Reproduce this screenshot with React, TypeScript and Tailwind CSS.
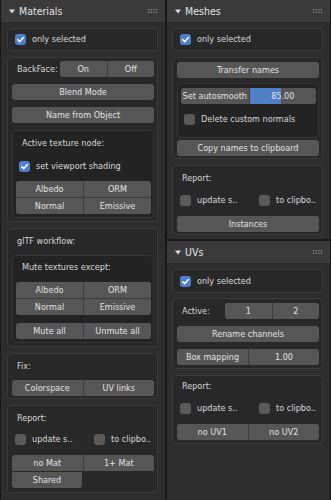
import type { ReactNode } from "react";

const BLUE = "#4f7fc6";

function Grip() {
  const dots = [];
  for (let c = 0; c < 4; c++) {
    for (let r = 0; r < 2; r++) {
      dots.push(<rect key={`${c}-${r}`} x={c * 2.6} y={r * 2.6} width="1.3" height="1.3" fill="#8a8a8a" />);
    }
  }
  return (
    <svg width="10" height="5" viewBox="0 0 10 5">
      {dots}
    </svg>
  );
}

function Header({ title }: { title: string }) {
  return (
    <div className="flex h-[22px] shrink-0 items-center bg-[#3a3a3a] pl-[8px] pr-[7px] text-[10.5px] text-[#e4e4e4]">
      <svg width="6" height="5" viewBox="0 0 6 5" className="mr-[4px]">
        <path d="M0 0.5h6L3 4.5z" fill="#d8d8d8" />
      </svg>
      <span className="flex-1">{title}</span>
      <Grip />
    </div>
  );
}

function Box({ children, className = "" }: { children: ReactNode; className?: string }) {
  return (
    <div className={`flex flex-col rounded-[4px] border border-[#3a3a3a] bg-[#282828] pl-[4px] pr-[3px] ${className}`}>
      {children}
    </div>
  );
}

function Inner({ children, className = "" }: { children: ReactNode; className?: string }) {
  return (
    <div className={`flex flex-col rounded-[4px] border border-[#363636] bg-[#232323] pl-[3px] pr-[2px] ${className}`}>
      {children}
    </div>
  );
}

function Btn({ children, className = "" }: { children: ReactNode; className?: string }) {
  return (
    <div className={`flex h-[16px] items-center justify-center rounded-[3px] bg-[#565656] text-[#e2e2e2] ${className}`}>
      {children}
    </div>
  );
}

function Group({ items, className = "" }: { items: string[]; className?: string }) {
  return (
    <div className={`flex h-[16px] gap-px overflow-hidden rounded-[3px] bg-[#3c3c3c] ${className}`}>
      {items.map((t) => (
        <div key={t} className="flex flex-1 items-center justify-center bg-[#565656] text-[#e2e2e2]">
          {t}
        </div>
      ))}
    </div>
  );
}

function Grid4({ items, className = "" }: { items: string[]; className?: string }) {
  return (
    <div className={`grid grid-cols-2 gap-px overflow-hidden rounded-[3px] bg-[#3c3c3c] ${className}`}>
      {items.map((t) => (
        <div key={t} className="flex h-[16px] items-center justify-center bg-[#565656] text-[#e2e2e2]">
          {t}
        </div>
      ))}
    </div>
  );
}

function Check({ on }: { on?: boolean }) {
  if (!on) return <span className="h-[11px] w-[11px] shrink-0 rounded-[3px] bg-[#5a5a5a]" />;
  return (
    <span className="flex h-[11px] w-[11px] shrink-0 items-center justify-center rounded-[3px] bg-[#4f7fc6]">
      <svg viewBox="0 0 10 10" className="h-[9px] w-[9px]">
        <path d="M2 5.3l2.1 2.1L8.2 2.8" stroke="#fff" strokeWidth="1.7" fill="none" strokeLinecap="round" strokeLinejoin="round" />
      </svg>
    </span>
  );
}

function CheckRow({ label, on, className = "" }: { label: string; on?: boolean; className?: string }) {
  return (
    <div className={`flex h-[16px] items-center gap-[6px] text-[#dadada] ${className}`}>
      <Check on={on} />
      <span className="whitespace-nowrap">{label}</span>
    </div>
  );
}

function Label({ children, className = "" }: { children: ReactNode; className?: string }) {
  return <div className={`flex h-[16px] items-center pl-[5px] text-[#d8d8d8] ${className}`}>{children}</div>;
}

function OnlySelected({ className = "" }: { className?: string }) {
  return (
    <div className={`flex h-[23px] items-center rounded-[4px] border border-[#3a3a3a] bg-[#282828] pl-[7px] ${className}`}>
      <CheckRow label="only selected" on />
    </div>
  );
}

function ReportChecks({ className = "" }: { className?: string }) {
  return (
    <div className={`flex h-[16px] items-center ${className}`}>
      <CheckRow label="update s.." className="w-[79px] pl-[3px]" />
      <CheckRow label="to clipbo.." className="pl-[3px]" />
    </div>
  );
}

function Field({ label, value, fill }: { label: string; value: string; fill?: number }) {
  return (
    <div className="flex h-[16px] gap-px overflow-hidden rounded-[3px] bg-[#3c3c3c] text-[#e2e2e2]">
      <div className="flex w-1/2 items-center justify-center whitespace-nowrap bg-[#565656]">{label}</div>
      <div className="relative flex flex-1 items-center justify-center bg-[#565656]">
        {fill !== undefined && (
          <div className="absolute inset-y-0 left-0" style={{ width: `${fill * 100}%`, background: BLUE }} />
        )}
        <span className="relative">{value}</span>
      </div>
    </div>
  );
}

export default function App() {
  return (
    <div className="flex h-[500px] w-[331px] overflow-hidden bg-[#181818] pl-px font-['DejaVu_Sans_Condensed','DejaVu_Sans',sans-serif] text-[9px] leading-none">
      {/* left column */}
      <div className="flex w-[164px] shrink-0 flex-col bg-[#2d2d2d]">
        <Header title="Materials" />
        <div className="flex flex-col pl-[6px] pr-[7px] pt-[6px]">
          <OnlySelected />

          <Box className="mt-[6px] pb-[3px] pt-[3px]">
            <div className="flex h-[16px] items-center">
              <div className="w-[48px] pl-[5px] text-[#d8d8d8]">BackFace:</div>
              <Group items={["On", "Off"]} className="flex-1" />
            </div>
            <Btn className="mt-[7px]">Blend Mode</Btn>
            <Btn className="mt-[7px]">Name from Object</Btn>
            <Inner className="mt-[7px] pb-[3px] pt-[4px]">
              <Label className="pl-[6px]">Active texture node:</Label>
              <CheckRow label="set viewport shading" on className="mt-[7px] pl-[3px]" />
              <Grid4 items={["Albedo", "ORM", "Normal", "Emissive"]} className="mt-[7px]" />
            </Inner>
          </Box>

          <Box className="mt-[6px] pb-[3px] pt-[4px]">
            <Label>glTF workflow:</Label>
            <Inner className="mt-[6px] pb-[3px] pt-[3px]">
              <Label className="pl-[6px]">Mute textures except:</Label>
              <Grid4 items={["Albedo", "ORM", "Normal", "Emissive"]} className="mt-[7px]" />
              <Group items={["Mute all", "Unmute all"]} className="mt-[8px]" />
            </Inner>
          </Box>

          <Box className="mt-[6px] pb-[2px] pt-[4px]">
            <Label>Fix:</Label>
            <Group items={["Colorspace", "UV links"]} className="mt-[6px]" />
          </Box>

          <Box className="mt-[6px] pb-[4px] pt-[4px]">
            <Label>Report:</Label>
            <ReportChecks className="mt-[5px]" />
            <Group items={["no Mat", "1+ Mat"]} className="mt-[8px] rounded-b-none" />
            <div className="mt-px flex">
              <Btn className="w-[70px] rounded-t-none">Shared</Btn>
            </div>
          </Box>
        </div>
      </div>

      <div className="w-[2px] shrink-0" />

      {/* right column */}
      <div className="flex w-[163px] shrink-0 flex-col">
        <div className="flex flex-col bg-[#2d2d2d] pb-[4px]">
          <Header title="Meshes" />
          <div className="flex flex-col pl-[5px] pr-[7px] pt-[6px]">
            <OnlySelected />

            <Box className="mt-[6px] pb-[2px] pt-[4px]">
              <Btn>Transfer names</Btn>
              <Inner className="mt-[5px] pb-[10px] pt-[4px]">
                <Field label="Set autosmooth" value="85.00" fill={85 / 180} />
                <CheckRow label="Delete custom normals" className="mt-[7px] pl-[3px]" />
              </Inner>
              <Btn className="mt-[2px]">Copy names to clipboard</Btn>
            </Box>

            <Box className="mt-[6px] pb-[2px] pt-[4px]">
              <Label>Report:</Label>
              <ReportChecks className="mt-[6px]" />
              <Btn className="mt-[8px]">Instances</Btn>
            </Box>
          </div>
        </div>

        <div className="mt-[2px] flex flex-1 flex-col bg-[#2d2d2d]">
          <Header title="UVs" />
          <div className="flex flex-col pl-[5px] pr-[7px] pt-[6px]">
            <OnlySelected className="h-[24px]" />

            <Box className="mt-[5px] pb-[3px] pt-[4px]">
              <div className="flex h-[16px] items-center">
                <div className="w-[48px] pl-[5px] text-[#d8d8d8]">Active:</div>
                <Group items={["1", "2"]} className="flex-1" />
              </div>
              <Btn className="mt-[7px]">Rename channels</Btn>
              <div className="mt-[7px]">
                <Field label="Box mapping" value="1.00" />
              </div>
            </Box>

            <Box className="mt-[6px] pb-[3px] pt-[2px]">
              <Label>Report:</Label>
              <ReportChecks className="mt-[6px]" />
              <Group items={["no UV1", "no UV2"]} className="mt-[8px]" />
            </Box>
          </div>
        </div>
      </div>
    </div>
  );
}
